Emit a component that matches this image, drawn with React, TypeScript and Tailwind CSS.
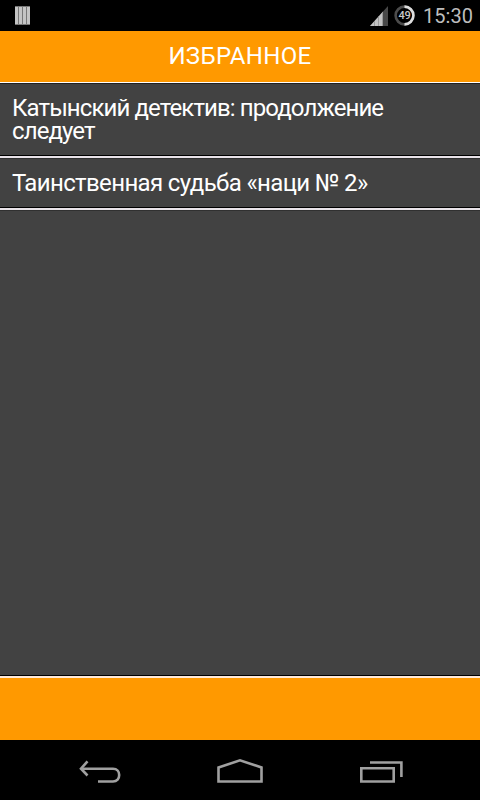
import React from 'react';
import clsx from 'clsx';

interface Article {
  id: number;
  title: string;
  tracking: string;
}

const favorites: Article[] = [
  { id: 1, title: 'Катынский детектив: продолжение следует', tracking: 'tracking-[-0.9px]' },
  { id: 2, title: 'Таинственная судьба «наци № 2»', tracking: 'tracking-[-0.64px]' },
];

const StatusBar: React.FC = () => (
  <div className="h-[31px] shrink-0 bg-black flex items-center justify-between pl-[15px] pr-[7px]">
    <svg width="15" height="19" viewBox="0 0 15 19">
      <path d="M0 0h15v19H0z" fill="#777" />
      <path d="M0 1h3v17H0zM4 1h3v17H4zM8 1h3v17H8zM12 1h3v17h-3z" fill="#c4c4c4" />
    </svg>

    <div className="flex items-center">
      <svg width="18" height="20" viewBox="0 0 18 20" className="mr-[6px]">
        <path d="M18 0v20H0z" fill="#484848" />
        <path d="M13 5.5V20H0z" fill="#c2c2c2" />
        <path d="M4.5 15v5M8.5 10.5v9.5M12.5 6v14" stroke="#999" strokeWidth="1" />
      </svg>
      <div className="relative w-[21px] h-[21px] mr-2 flex items-center justify-center">
        <svg width="21" height="21" viewBox="0 0 21 21" fill="none" strokeWidth="2.600" className="absolute inset-0">
          <circle cx="10.500" cy="10.500" r="8.900" stroke="#4c4c4c" />
          <path d="M10.500 1.600a8.900 8.900 0 0 1 0 17.800" stroke="#dedede" />
        </svg>
        <span className="relative font-['Roboto',sans-serif] text-[11px] leading-none font-medium tracking-[-0.3px] text-[#c8c8c8]">49</span>
      </div>
      <span className="font-['Roboto',sans-serif] text-[20px] leading-none tracking-[0.05px] text-[#bebebe]">15:30</span>
    </div>
  </div>
);

const NavBar: React.FC = () => (
  <div className="h-[60px] shrink-0 bg-black flex items-center pt-[2px] pl-[79px]">
    <svg width="42" height="24" viewBox="0 0 42 24" fill="none" stroke="#a0a0a0" strokeWidth="2.600">
      <path d="M2 9.700h32c4 0 6.200 3 6.200 6.400s-2.200 6.400-6.200 6.400H19" />
      <path d="M8.500 2.300L2 9.700l6.500 6.800" />
    </svg>
    <svg width="46" height="26" viewBox="0 0 46 26" fill="none" stroke="#a0a0a0" strokeWidth="2.600" className="ml-24">
      <path d="M1.500 9.500L23 2.300l21.500 7.200v14h-43z" />
    </svg>
    <svg width="44" height="24" viewBox="0 0 44 24" fill="none" stroke="#a0a0a0" strokeWidth="2.600" className="ml-[97px]">
      <path d="M1.300 9.300h32.400v13.200H1.300zM10 3.500h31.400V18" />
    </svg>
  </div>
);

const App: React.FC = () => {
  return (
    <div className="w-[480px] h-[800px] flex flex-col overflow-hidden bg-[#424242] font-['Roboto',sans-serif] text-white">
      <StatusBar />

      <header className="h-[51px] shrink-0 bg-[#ff9900] flex items-center justify-center pb-[2px]">
        <h1 className="text-[24px] leading-none tracking-[0.35px]">ИЗБРАННОЕ</h1>
      </header>

      <main className="flex-1 border-t border-white">
        <ul className="border-t border-[#222]">
          {favorites.map((article) => (
            <li key={article.id} className="border-b border-[#303030]">
              <div className="border-b-2 border-[#e8e2e8]">
                <p
                  className={clsx(
                    'border-b border-black pl-3 pr-5 pt-[13px] pb-3 text-[24px] leading-[23px]',
                    article.tracking
                  )}
                >
                  {article.title}
                </p>
              </div>
            </li>
          ))}
        </ul>
      </main>

      <footer className="h-[65px] shrink-0 bg-[#ff9900] border-t border-black">
        <div className="h-[2px] bg-[#ffe9d8]" />
      </footer>
      <NavBar />
    </div>
  );
};

export default App;
